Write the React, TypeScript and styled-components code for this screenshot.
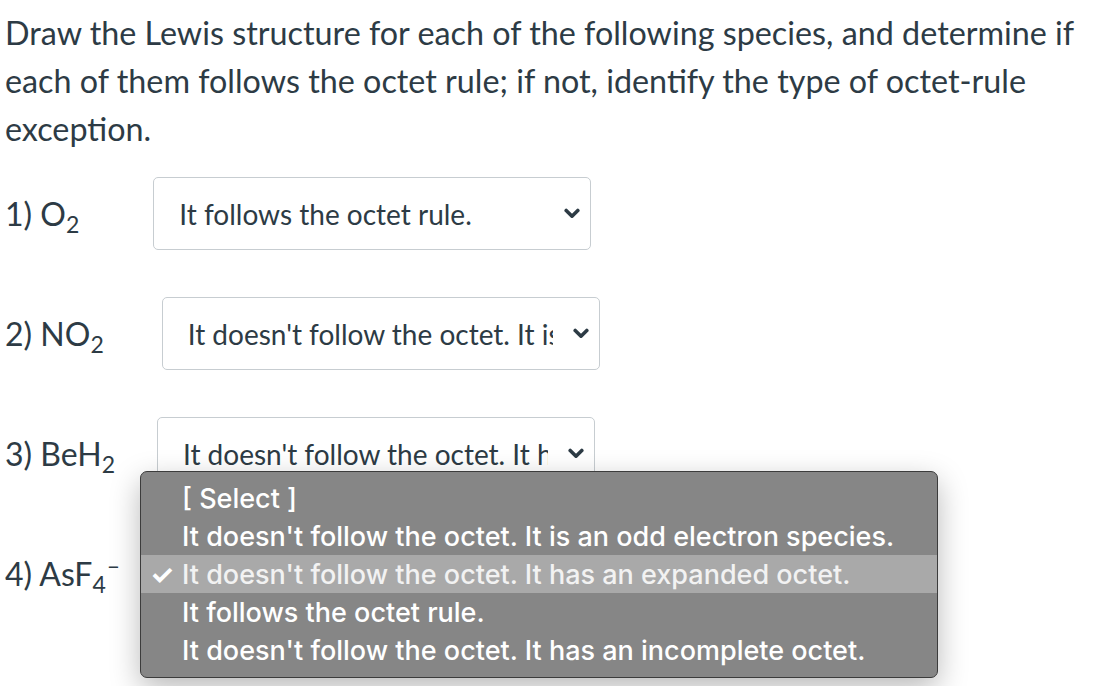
import styled, { createGlobalStyle } from "styled-components";

const GlobalStyle = createGlobalStyle`
  body {
    margin: 0;
    background: #ffffff;
    font-family: Lato, "Noto Sans", sans-serif;
    color: #2d3b45;
  }
`;

interface Question {
  id: number;
  formula: string;
  sub: string;
  charge?: string;
  value?: string;
  offset: number;
}

const options = [
  "[ Select ]",
  "It doesn't follow the octet. It is an odd electron species.",
  "It doesn't follow the octet. It has an expanded octet.",
  "It follows the octet rule.",
  "It doesn't follow the octet. It has an incomplete octet.",
];

const questions: Question[] = [
  { id: 1, formula: "O", sub: "2", value: "It follows the octet rule.", offset: 74 },
  {
    id: 2,
    formula: "NO",
    sub: "2",
    value: "It doesn't follow the octet. It is an odd electron species.",
    offset: 58,
  },
  {
    id: 3,
    formula: "BeH",
    sub: "2",
    value: "It doesn't follow the octet. It has an incomplete octet.",
    offset: 42,
  },
  { id: 4, formula: "AsF", sub: "4", charge: "–", offset: 0 },
];

const Chevron = () => (
  <svg width="16" height="11" viewBox="0 0 16 11">
    <path
      d="M2.2 2.5 L8 8.2 L13.8 2.5"
      fill="none"
      stroke="#2d3b45"
      strokeWidth="3.6"
      strokeLinecap="round"
      strokeLinejoin="round"
    />
  </svg>
);

const App = () => {
  return (
    <Page>
      <GlobalStyle />
      <Prompt>
        Draw the Lewis structure for each of the following species, and
        determine if each of them follows the octet rule; if not, identify the
        type of octet-rule exception.
      </Prompt>
      <List>
        {questions.map((q) => (
          <Row key={q.id}>
            <Label>
              {q.id}) {q.formula}
              <Sub>{q.sub}</Sub>
              {q.charge && <Sup>{q.charge}</Sup>}
            </Label>
            {q.value && (
              <SelectBox $offset={q.offset}>
                <SelectText>{q.value}</SelectText>
                <Chevron />
              </SelectBox>
            )}
          </Row>
        ))}
        <Menu>
          {options.map((o, i) => (
            <MenuItem key={o} $active={i === 2}>
              <Check>{i === 2 ? "✓" : ""}</Check>
              {o}
            </MenuItem>
          ))}
        </Menu>
      </List>
    </Page>
  );
};

export default App;

const Page = styled.div`
  width: 1098px;
  height: 686px;
  overflow: hidden;
  padding: 0 0 0 5px;
  box-sizing: border-box;
`;

const Prompt = styled.p`
  margin: 0;
  padding-top: 9px;
  font-size: 32.3px;
  line-height: 48px;
  width: 1080px;
`;

const List = styled.div`
  position: relative;
  margin-top: 24px;
  display: flex;
  flex-direction: column;
  gap: 47px;
`;

const Row = styled.div`
  display: flex;
  align-items: center;
  height: 73px;
`;

const Label = styled.span`
  font-size: 32px;
  white-space: nowrap;
`;

const Sub = styled.sub`
  font-size: 0.72em;
  vertical-align: -0.3em;
  line-height: 0;
`;

const Sup = styled.sup`
  font-size: 0.72em;
  vertical-align: 0.5em;
  line-height: 0;
  margin-left: 1px;
`;

const SelectBox = styled.div<{ $offset: number }>`
  margin-left: ${(p) => p.$offset}px;
  width: 438px;
  height: 73px;
  box-sizing: border-box;
  border: 1px solid #c7cdd1;
  border-radius: 5px;
  background: #ffffff;
  display: flex;
  align-items: center;
  padding: 0 10px 0 25px;
  gap: 20px;
`;

const SelectText = styled.span`
  flex: 1;
  overflow: hidden;
  white-space: nowrap;
  font-size: 28px;
  color: #2d3b45;
`;

const Menu = styled.div`
  position: absolute;
  left: 135px;
  top: 294px;
  width: 798px;
  box-sizing: border-box;
  padding: 7px 0 8px;
  background: #868686;
  border: 1px solid #3c3c3c;
  border-radius: 7px;
  box-shadow: 0 10px 30px rgba(0, 0, 0, 0.28);
  font-family: Inter, "Liberation Sans", sans-serif;
`;

const MenuItem = styled.div<{ $active: boolean }>`
  display: flex;
  align-items: center;
  height: 38px;
  font-size: 27px;
  font-weight: 500;
  white-space: nowrap;
  color: ${(p) => (p.$active ? "#f2f2f2" : "#ffffff")};
  background: ${(p) => (p.$active ? "#a9a9a9" : "transparent")};
`;

const Check = styled.span`
  width: 41px;
  padding-left: 9px;
  box-sizing: border-box;
  font-size: 27px;
  font-weight: 700;
  color: #ffffff;
`;
